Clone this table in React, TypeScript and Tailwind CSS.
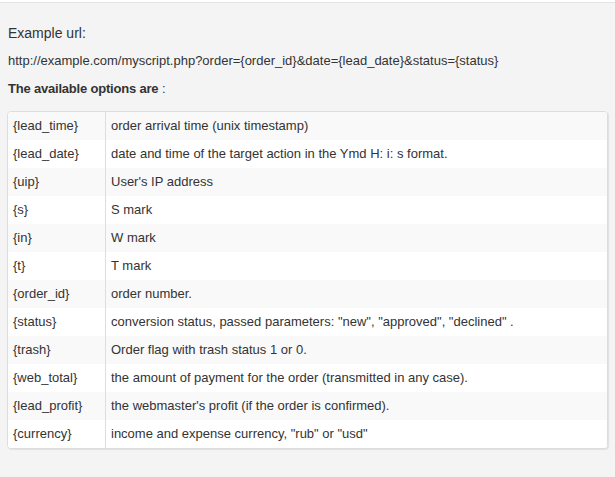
import React from "react";

const rows: [string, string][] = [
  ["{lead_time}", "order arrival time (unix timestamp)"],
  ["{lead_date}", "date and time of the target action in the Ymd H: i: s format."],
  ["{uip}", "User's IP address"],
  ["{s}", "S mark"],
  ["{in}", "W mark"],
  ["{t}", "T mark"],
  ["{order_id}", "order number."],
  ["{status}", 'conversion status, passed parameters: "new", "approved", "declined" .'],
  ["{trash}", "Order flag with trash status 1 or 0."],
  ["{web_total}", "the amount of payment for the order (transmitted in any case)."],
  ["{lead_profit}", "the webmaster's profit (if the order is confirmed)."],
  ["{currency}", 'income and expense currency, "rub" or "usd"'],
];

export default function App() {
  return (
    <div
      className="w-[615px] h-[477px] bg-white pt-[2px] text-[#333]"
      style={{ fontFamily: '"Liberation Sans", Arial, sans-serif' }}
    >
      <div className="h-[475px] bg-[#f4f4f4] border-t border-[#e3e3e3] px-[7px] pt-[20px]">
        <div className="text-[14px] leading-[20px] pl-px">Example url:</div>
        <div className="text-[13px] leading-[20px] mt-[8px] pl-px">
          http://example.com/myscript.php?order=&#123;order_id&#125;&amp;date=&#123;lead_date&#125;&amp;status=&#123;status&#125;
        </div>
        <div className="text-[13px] leading-[20px] mt-[8px] pl-px">
          <b className="tracking-[-0.2px]">The available options are</b> :
        </div>
        <div className="mt-[12px] border border-[#dddddd] rounded-[4px] overflow-hidden bg-white shadow-[1px_1px_1px_rgba(0,0,0,0.08)]">
          {rows.map(([k, v], i) => (
            <div
              key={k}
              className={`flex h-[28px] items-center text-[13px] ${i % 2 === 0 ? "bg-[#f9f9f9]" : "bg-white"}`}
            >
              <div className="w-[98px] h-full flex items-center pl-[5px] border-r border-[#dddddd] shrink-0">
                {k}
              </div>
              <div className="flex-1 pl-[5px]">{v}</div>
            </div>
          ))}
        </div>
      </div>
    </div>
  );
}
